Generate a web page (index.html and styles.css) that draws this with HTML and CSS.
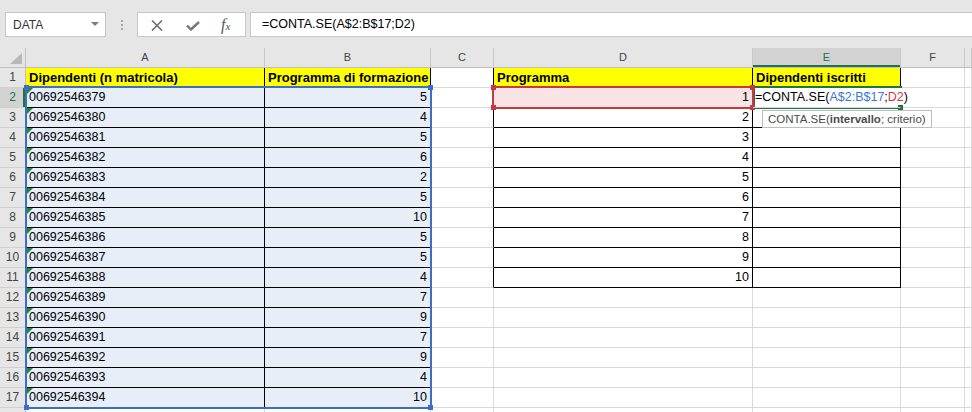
FILE: index.html
```html
<!DOCTYPE html>
<html lang="it">
<head>
<meta charset="utf-8">
<title>CONTA.SE</title>
<link rel="stylesheet" href="styles.css">
</head>
<body>
<div class="app">
  <div class="topbar">
    <div class="namebox"><span>DATA</span><span class="dd"></span></div>
    <div class="grip"><i></i><i></i><i></i></div>
    <div class="fxbox">
      <svg class="ico-x" width="12" height="11" viewBox="0 0 12 11"><path d="M1 0.5L11 10.5M11 0.5L1 10.5" stroke="#6e6e6e" stroke-width="1.6" fill="none"/></svg>
      <svg class="ico-ok" width="14" height="10" viewBox="0 0 14 10"><path d="M1 4.5L5 8.5L13 1" stroke="#767676" stroke-width="2.4" fill="none"/></svg>
      <span class="fx"><i>f</i><i class="fx-x">x</i></span>
    </div>
    <div class="formula">=CONTA.SE(A$2:B$17;D2)</div>
  </div>

  <div class="sheet">
    <div class="grid">
      <div class="corner"><span class="corner-tri"></span></div>
      <div class="ch">A</div>
      <div class="ch">B</div>
      <div class="ch">C</div>
      <div class="ch">D</div>
      <div class="ch act">E</div>
      <div class="ch">F</div>
      <div class="ch"></div>

      <div class="rh">1</div>
      <div class="c y b bk">Dipendenti (n matricola)</div>
      <div class="c y b bk">Programma di formazione</div>
      <div class="c bkr"></div>
      <div class="c y b bk">Programma</div>
      <div class="c y b bk">Dipendenti iscritti</div>
      <div class="c"></div>
      <div class="c"></div>

      <div class="rh act">2</div>
      <div class="c sel bk tri">00692546379</div>
      <div class="c sel bk num">5</div>
      <div class="c bkr"></div>
      <div class="c pink bk num">1</div>
      <div class="c edit">=CONTA.SE(<span class="rb">A$2:B$17</span>;<span class="rr">D2</span>)</div>
      <div class="c"></div>
      <div class="c"></div>

      <div class="rh">3</div>
      <div class="c sel bk tri">00692546380</div>
      <div class="c sel bk num">4</div>
      <div class="c bkr"></div>
      <div class="c bk num">2</div>
      <div class="c bk"></div>
      <div class="c"></div>
      <div class="c"></div>

      <div class="rh">4</div>
      <div class="c sel bk tri">00692546381</div>
      <div class="c sel bk num">5</div>
      <div class="c bkr"></div>
      <div class="c bk num">3</div>
      <div class="c bk"></div>
      <div class="c"></div>
      <div class="c"></div>

      <div class="rh">5</div>
      <div class="c sel bk tri">00692546382</div>
      <div class="c sel bk num">6</div>
      <div class="c bkr"></div>
      <div class="c bk num">4</div>
      <div class="c bk"></div>
      <div class="c"></div>
      <div class="c"></div>

      <div class="rh">6</div>
      <div class="c sel bk tri">00692546383</div>
      <div class="c sel bk num">2</div>
      <div class="c bkr"></div>
      <div class="c bk num">5</div>
      <div class="c bk"></div>
      <div class="c"></div>
      <div class="c"></div>

      <div class="rh">7</div>
      <div class="c sel bk tri">00692546384</div>
      <div class="c sel bk num">5</div>
      <div class="c bkr"></div>
      <div class="c bk num">6</div>
      <div class="c bk"></div>
      <div class="c"></div>
      <div class="c"></div>

      <div class="rh">8</div>
      <div class="c sel bk tri">00692546385</div>
      <div class="c sel bk num">10</div>
      <div class="c bkr"></div>
      <div class="c bk num">7</div>
      <div class="c bk"></div>
      <div class="c"></div>
      <div class="c"></div>

      <div class="rh">9</div>
      <div class="c sel bk tri">00692546386</div>
      <div class="c sel bk num">5</div>
      <div class="c bkr"></div>
      <div class="c bk num">8</div>
      <div class="c bk"></div>
      <div class="c"></div>
      <div class="c"></div>

      <div class="rh">10</div>
      <div class="c sel bk tri">00692546387</div>
      <div class="c sel bk num">5</div>
      <div class="c bkr"></div>
      <div class="c bk num">9</div>
      <div class="c bk"></div>
      <div class="c"></div>
      <div class="c"></div>

      <div class="rh">11</div>
      <div class="c sel bk tri">00692546388</div>
      <div class="c sel bk num">4</div>
      <div class="c bkr"></div>
      <div class="c bk num">10</div>
      <div class="c bk"></div>
      <div class="c"></div>
      <div class="c"></div>

      <div class="rh">12</div>
      <div class="c sel bk tri">00692546389</div>
      <div class="c sel bk num">7</div>
      <div class="c"></div>
      <div class="c"></div>
      <div class="c"></div>
      <div class="c"></div>
      <div class="c"></div>

      <div class="rh">13</div>
      <div class="c sel bk tri">00692546390</div>
      <div class="c sel bk num">9</div>
      <div class="c"></div>
      <div class="c"></div>
      <div class="c"></div>
      <div class="c"></div>
      <div class="c"></div>

      <div class="rh">14</div>
      <div class="c sel bk tri">00692546391</div>
      <div class="c sel bk num">7</div>
      <div class="c"></div>
      <div class="c"></div>
      <div class="c"></div>
      <div class="c"></div>
      <div class="c"></div>

      <div class="rh">15</div>
      <div class="c sel bk tri">00692546392</div>
      <div class="c sel bk num">9</div>
      <div class="c"></div>
      <div class="c"></div>
      <div class="c"></div>
      <div class="c"></div>
      <div class="c"></div>

      <div class="rh">16</div>
      <div class="c sel bk tri">00692546393</div>
      <div class="c sel bk num">4</div>
      <div class="c"></div>
      <div class="c"></div>
      <div class="c"></div>
      <div class="c"></div>
      <div class="c"></div>

      <div class="rh">17</div>
      <div class="c sel bk tri">00692546394</div>
      <div class="c sel bk num">10</div>
      <div class="c"></div>
      <div class="c"></div>
      <div class="c"></div>
      <div class="c"></div>
      <div class="c"></div>

      <div class="rh"></div>
      <div class="c"></div>
      <div class="c"></div>
      <div class="c"></div>
      <div class="c"></div>
      <div class="c"></div>
      <div class="c"></div>
      <div class="c"></div>
    </div>

    <div class="ref ref-blue"></div>
    <span class="hd hd-blue h-b1"></span>
    <span class="hd hd-blue h-b2"></span>
    <span class="hd hd-blue h-b3"></span>
    <span class="hd hd-blue h-b4"></span>

    <div class="active-cell"></div>
    <span class="hd hd-green h-fill"></span>

    <div class="ref ref-red"></div>
    <span class="hd hd-red h-r1"></span>
    <span class="hd hd-red h-r2"></span>
    <span class="hd hd-red h-r3"></span>
    <span class="hd hd-red h-r4"></span>

    <div class="tooltip">CONTA.SE(<b>intervallo</b>; criterio)</div>
  </div>
</div>
</body>
</html>
```

FILE: styles.css
```css
* { box-sizing: border-box; margin: 0; padding: 0; }
html, body { width: 972px; height: 412px; overflow: hidden; background: #fff; }
body { font-family: "Liberation Sans", Arial, sans-serif; font-size: 12.5px; color: #000; }

.app { width: 972px; height: 412px; overflow: hidden; }

/* ---------- formula bar ---------- */
.topbar {
  height: 48px;
  background: #e6e6e6;
  display: flex;
  align-items: flex-start;
  padding: 12px 0 0 5px;
}
.namebox {
  width: 101px;
  height: 25px;
  background: #fff;
  border: 1px solid #c6c6c6;
  display: flex;
  align-items: center;
  justify-content: space-between;
  padding: 0 6px 0 7px;
  font-size: 12px;
  color: #333;
}
.dd {
  width: 0; height: 0;
  border-left: 4px solid transparent;
  border-right: 4px solid transparent;
  border-top: 4px solid #7d7d7d;
  margin-top: -1px;
}
.grip {
  margin: 8px 0 0 15px;
  width: 2px;
  display: flex;
  flex-direction: column;
  gap: 2px;
}
.grip i { display: block; width: 2px; height: 2px; background: #a6a6a6; }
.fxbox {
  margin-left: 14px;
  width: 109px;
  height: 25px;
  background: #fff;
  border: 1px solid #c6c6c6;
  display: flex;
  align-items: center;
  padding-left: 13px;
}
.ico-x { display: block; margin-top: 1px; }
.ico-ok { display: block; margin-left: 23px; margin-top: 2px; }
.fx {
  margin-left: 21px;
  font-family: "Liberation Serif", "Times New Roman", serif;
  color: #555;
  font-size: 16px;
  display: flex;
  align-items: baseline;
}
.fx i { font-style: italic; }
.fx .fx-x { font-size: 11px; margin-left: 0; }
.formula {
  margin-left: 4px;
  flex: 1;
  height: 25px;
  background: #fff;
  border: 1px solid #c6c6c6;
  border-right: none;
  padding-left: 11px;
  line-height: 23px;
  font-size: 12.5px;
  white-space: nowrap;
}

/* ---------- sheet ---------- */
.sheet { position: relative; height: 364px; overflow: hidden; }
.grid {
  display: grid;
  grid-template-columns: 26px 239px 166px 63px 259px 148px 64px 1fr;
  grid-auto-rows: 20px;
}
.corner {
  background: #e6e6e6;
  border-right: 1px solid #bfbfbf;
  border-bottom: 1px solid #bfbfbf;
  display: flex;
  align-items: flex-end;
  justify-content: flex-end;
  padding: 0 3px 3px 0;
}
.corner-tri {
  width: 0; height: 0;
  border-left: 12px solid transparent;
  border-bottom: 11px solid #b8b8b8;
}
.ch {
  background: #e6e6e6;
  border-right: 1px solid #c8c8c8;
  border-bottom: 1px solid #bfbfbf;
  text-align: center;
  line-height: 19px;
  font-size: 11px;
  color: #444;
}
.ch.act { background: #d2d2d2; color: #217346; box-shadow: inset 0 -2px 0 #217346; }
.rh {
  background: #e6e6e6;
  border-right: 1px solid #bfbfbf;
  border-bottom: 1px solid #d0d0d0;
  text-align: center;
  line-height: 19px;
  font-size: 12px;
  color: #444;
}
.rh.act { background: #d2d2d2; color: #217346; box-shadow: inset -2px 0 0 #217346; }

.c {
  border-right: 1px solid #d9d9d9;
  border-bottom: 1px solid #d9d9d9;
  padding: 0 3px;
  line-height: 19px;
  white-space: nowrap;
  overflow: hidden;
}
.y { background: #ffff00; }
.b { font-weight: bold; font-size: 13px; }
.bk { border-right-color: #000; border-bottom-color: #000; }
.bkr { border-right-color: #000; }
.num { text-align: right; }
.sel { background: #e7eef8; }
.pink { background: #f8e4e4; }
.tri { position: relative; }
.tri::before {
  content: "";
  position: absolute;
  left: 1px; top: 0;
  border-top: 6px solid #1a8a3a;
  border-right: 6px solid transparent;
}
.edit {
  overflow: visible;
  border-right-color: transparent;
  padding-left: 2px;
  position: relative;
  z-index: 1;
}
.rb { color: #3a76d4; }
.rr { color: #d0393d; }

/* ---------- overlays ---------- */
.ref { position: absolute; pointer-events: none; }
.ref-blue { left: 25px; top: 38px; width: 407px; height: 323px; border: 2px solid #3c6ec6; }
.ref-red { left: 492px; top: 38px; width: 262px; height: 23px; border: 2px solid #c43a3e; }
.active-cell {
  position: absolute;
  left: 753px; top: 38px; width: 149px; height: 23px;
  border-top: 2px solid #217346;
  border-bottom: 2px solid #217346;
  border-left: 2px solid #217346;
}
.hd { position: absolute; width: 5px; height: 5px; }
.hd-blue { background: #3c6ec6; }
.hd-red { background: #c43a3e; }
.hd-green { background: #217346; }
.h-b1 { left: 24px; top: 37px; }
.h-b2 { left: 428px; top: 37px; }
.h-b3 { left: 24px; top: 357px; }
.h-b4 { left: 428px; top: 357px; }
.h-r1 { left: 491px; top: 37px; }
.h-r2 { left: 750px; top: 37px; }
.h-r3 { left: 491px; top: 57px; }
.h-r4 { left: 750px; top: 57px; }
.h-fill { left: 898px; top: 57px; }

.tooltip {
  position: absolute;
  left: 762px; top: 62px;
  height: 18px;
  padding: 0 5px;
  background: #fff;
  border: 1px solid #bdbdbd;
  font-size: 11.5px;
  line-height: 16px;
  color: #4a4a4a;
  white-space: nowrap;
}
```
